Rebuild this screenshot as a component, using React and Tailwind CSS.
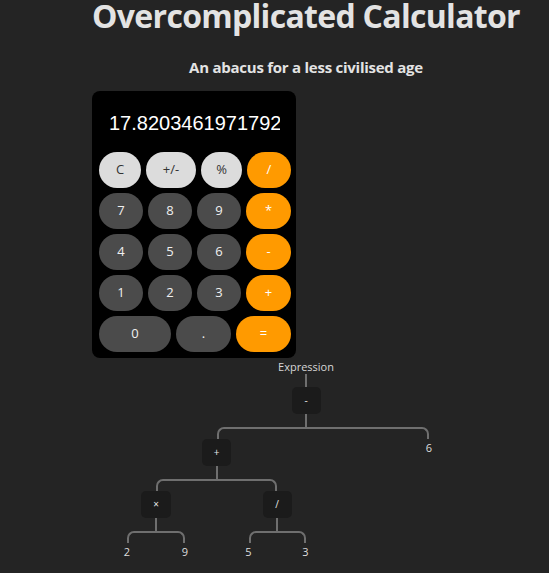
import React from 'react';

const rows = [
  [
    { label: 'C', w: 'w-[42px]', kind: 'light' },
    { label: '+/-', w: 'w-[50px]', kind: 'light' },
    { label: '%', w: 'w-[41px]', kind: 'light' },
    { label: '/', w: 'w-[44px]', kind: 'op' },
  ],
  [
    { label: '7', w: 'w-[44px]', kind: 'num' },
    { label: '8', w: 'w-[44px]', kind: 'num' },
    { label: '9', w: 'w-[44px]', kind: 'num' },
    { label: '*', w: 'w-[45px]', kind: 'op' },
  ],
  [
    { label: '4', w: 'w-[44px]', kind: 'num' },
    { label: '5', w: 'w-[44px]', kind: 'num' },
    { label: '6', w: 'w-[44px]', kind: 'num' },
    { label: '-', w: 'w-[45px]', kind: 'op' },
  ],
  [
    { label: '1', w: 'w-[44px]', kind: 'num' },
    { label: '2', w: 'w-[44px]', kind: 'num' },
    { label: '3', w: 'w-[44px]', kind: 'num' },
    { label: '+', w: 'w-[45px]', kind: 'op' },
  ],
  [
    { label: '0', w: 'w-[72px]', kind: 'num' },
    { label: '.', w: 'w-[55px]', kind: 'num' },
    { label: '=', w: 'w-[55px]', kind: 'op' },
  ],
];

const kinds = {
  light: 'bg-[#dcdcdc] text-[#333]',
  num: 'bg-[#4b4b4b] text-[#f0f0f0]',
  op: 'bg-[#ff9a00] text-white',
};

// expression tree: (2 × 9 + 5 / 3) - 6
const tree = {
  op: '-',
  widths: ['w-[246px]', 'w-[179px]'],
  children: [
    {
      op: '+',
      widths: ['w-[121px]', 'w-[121px]'],
      children: [
        { op: '×', widths: ['w-[58px]', 'w-[58px]'], children: [{ value: '2' }, { value: '9' }] },
        { op: '/', widths: ['w-[57px]', 'w-[57px]'], children: [{ value: '5' }, { value: '3' }] },
      ],
    },
    { value: '6' },
  ],
};

function Connector({ first }) {
  return first ? (
    <div className="self-end w-1/2 h-[12px] border-t-2 border-l-2 border-[#6f6f6f] rounded-tl-[7px]" />
  ) : (
    <div className="self-start w-1/2 h-[12px] border-t-2 border-r-2 border-[#6f6f6f] rounded-tr-[7px]" />
  );
}

function TreeNode({ node }) {
  if (node.value !== undefined) {
    return <span className="text-[11px] leading-[18px] text-[#dedede]">{node.value}</span>;
  }
  return (
    <div className="flex flex-col items-center">
      <div className="h-[27px] min-w-[29px] px-3 rounded-[5px] bg-[#1b1b1b] flex items-center justify-center text-[10px] text-[#e6e6e6]">
        {node.op}
      </div>
      <div className="w-[2px] h-[13px] bg-[#6f6f6f]" />
      <div className="flex">
        {node.children.map((child, i) => (
          <div key={i} className={`${node.widths[i]} flex flex-col items-center`}>
            <Connector first={i === 0} />
            <TreeNode node={child} />
          </div>
        ))}
      </div>
    </div>
  );
}

export default function App() {
  return (
    <div className="min-h-screen bg-[#242424] overflow-hidden font-['Open_Sans',sans-serif] text-[#e3e3e3]">
      <div className="w-[612px] flex flex-col items-center pb-4">
        <h1 className="pt-[1px] text-[32px] leading-[30px] font-bold tracking-[-0.7px]">Overcomplicated Calculator</h1>
        <p className="mt-[26px] text-[15px] leading-[20px] font-bold tracking-[-0.25px]">An abacus for a less civilised age</p>

        <div className="self-start ml-[92px] mt-[14px] w-[204px] bg-black rounded-[8px] pt-[7px] pl-[7px] pr-[5px] pb-[6px]">
          <div className="h-[49px] flex items-center pl-[10px] pr-[11px] mb-[5px]">
            <div className="overflow-hidden whitespace-nowrap font-['Liberation_Sans',Arial,sans-serif] text-[20px] text-white">
              17.82034619717925
            </div>
          </div>
          <div className="flex flex-col gap-[5px]">
            {rows.map((row, r) => (
              <div key={r} className="flex gap-[5px]">
                {row.map((b) => (
                  <button
                    key={b.label}
                    className={`${b.w} ${kinds[b.kind]} h-[36px] rounded-full flex items-center justify-center text-[13px]`}
                  >
                    {b.label}
                  </button>
                ))}
              </div>
            ))}
          </div>
        </div>

        <div className="mt-[2px] flex flex-col items-center">
          <span className="text-[11px] leading-[14px] text-[#d6d6d6]">Expression</span>
          <div className="w-[2px] h-[13px] bg-[#6f6f6f]" />
          <TreeNode node={tree} />
        </div>
      </div>
    </div>
  );
}
